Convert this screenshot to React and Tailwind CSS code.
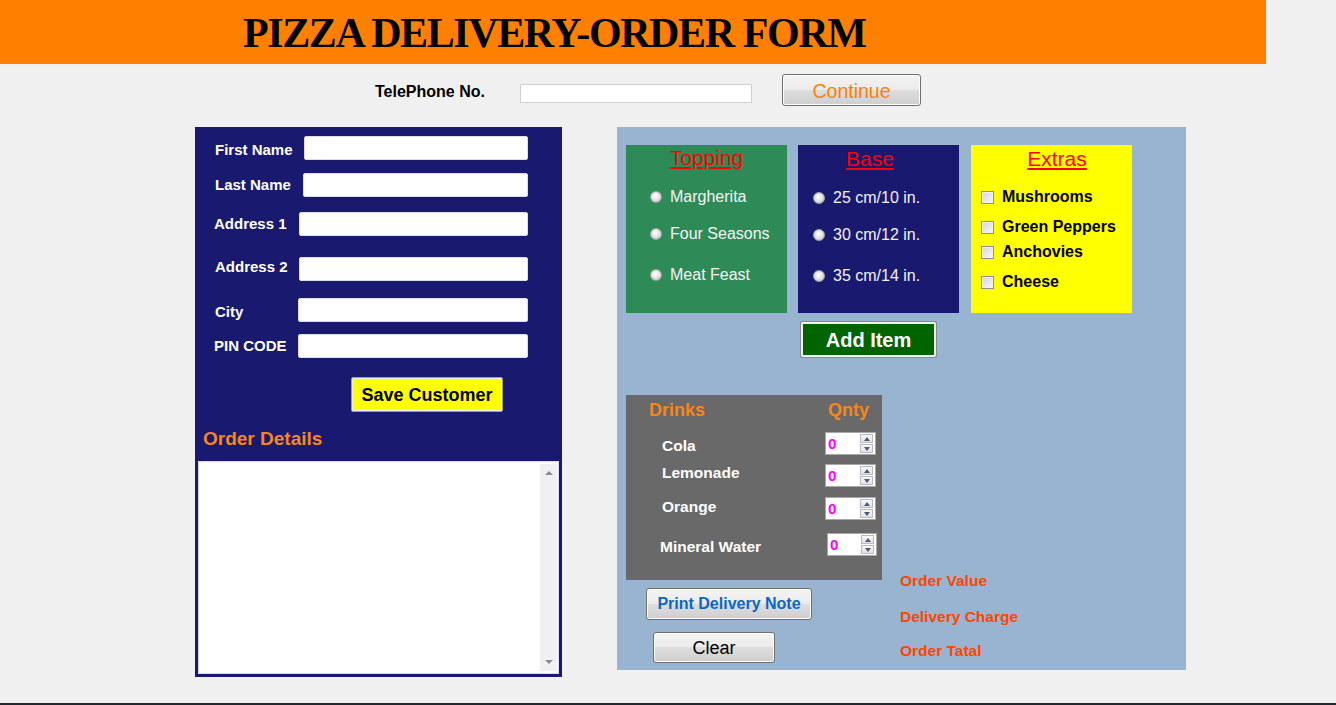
import React from 'react';

const btn =
  'border border-[#707070] rounded-[3px] bg-[linear-gradient(#f4f4f4,#ebebeb_50%,#dddddd_50%,#cfcfcf)] shadow-[inset_0_0_0_1px_#fcfcfc] flex items-center justify-center';

function Radio() {
  return (
    <span className="w-[12px] h-[12px] shrink-0 rounded-full border border-[#a3a3a3] bg-[radial-gradient(circle_at_45%_40%,#ffffff_0%,#ececec_35%,#b8b8b8_100%)]" />
  );
}

function Check() {
  return (
    <span className="w-[13px] h-[13px] shrink-0 border border-[#8f8f8f] bg-[linear-gradient(135deg,#d6d6d6,#f7f7f7)] shadow-[inset_0_0_0_1px_#f2f2f2]" />
  );
}

function Arrow({ up }) {
  return (
    <div className="flex-1 border border-[#b9b9c4] bg-[linear-gradient(#f7f7f7,#e2e2e2)] flex items-center justify-center">
      <svg width="6" height="4" viewBox="0 0 6 4">
        {up ? <path d="M0 4 L3 0 L6 4 Z" fill="#4d5a78" /> : <path d="M0 0 L3 4 L6 0 Z" fill="#4d5a78" />}
      </svg>
    </div>
  );
}

function Spinner({ className }) {
  return (
    <div className={className}>
      <span className="flex-1 pl-[2px] text-[15px] font-bold text-[#ff00ff] leading-none">0</span>
      <div className="w-[13px] h-[19px] mr-[2px] flex flex-col gap-[1px]">
        <Arrow up />
        <Arrow />
      </div>
    </div>
  );
}

const fields = [
  { label: 'First Name', row: 'mt-[9px] pl-[20px]', lab: 'w-[89px] mt-[4px]' },
  { label: 'Last Name', row: 'mt-[13px] pl-[20px]', lab: 'w-[88px]' },
  { label: 'Address 1', row: 'mt-[15px] pl-[19px]', lab: 'w-[85px]' },
  { label: 'Address 2', row: 'mt-[21px] pl-[20px]', lab: 'w-[84px] mb-[4px]' },
  { label: 'City', row: 'mt-[17px] pl-[20px]', lab: 'w-[83px] mt-[4px]' },
  { label: 'PIN CODE', row: 'mt-[12px] pl-[19px]', lab: 'w-[84px]' },
];

const toppings = [
  { t: 'Margherita', cls: 'mt-[17px]' },
  { t: 'Four Seasons', cls: 'mt-[17px]' },
  { t: 'Meat Feast', cls: 'mt-[21px]' },
];

const bases = [
  { t: '25 cm/10 in.', cls: 'mt-[17px]' },
  { t: '30 cm/12 in.', cls: 'mt-[17px]' },
  { t: '35 cm/14 in.', cls: 'mt-[21px]' },
];

const extras = [
  { t: 'Mushrooms', cls: 'mt-[16px]' },
  { t: 'Green Peppers', cls: 'mt-[10px]' },
  { t: 'Anchovies', cls: 'mt-[5px]' },
  { t: 'Cheese', cls: 'mt-[10px]' },
];

const drinks = [
  { t: 'Cola', row: 'mt-[12px] pl-[36px] pr-[6px]', lab: 'mt-[5px]', spin: 'w-[51px]' },
  { t: 'Lemonade', row: 'mt-[9px] pl-[36px] pr-[6px]', lab: 'mb-[5px]', spin: 'w-[51px]' },
  { t: 'Orange', row: 'mt-[10px] pl-[36px] pr-[6px]', lab: 'mb-[3px]', spin: 'w-[51px]' },
  { t: 'Mineral Water', row: 'mt-[13px] pl-[34px] pr-[5px]', lab: 'mt-[5px]', spin: 'w-[50px]' },
];

export default function App() {
  return (
    <div className="w-[1336px] h-[705px] bg-[#f0f0f0] flex flex-col overflow-hidden font-['Liberation_Sans',Arial,sans-serif]">
      {/* header */}
      <div className="w-[1266px] h-[64px] shrink-0 bg-[#ff8000] flex items-center pl-[243px]">
        <h1 className="font-['Liberation_Serif','Times_New_Roman',serif] font-bold text-[42px] leading-none tracking-[-1.4px] text-black mt-[2px]">
          PIZZA DELIVERY-ORDER FORM
        </h1>
      </div>

      {/* telephone row */}
      <div className="h-[63px] shrink-0 flex items-start pl-[375px]">
        <span className="w-[145px] mt-[19px] text-[16px] leading-[18px] font-bold text-black">TelePhone No.</span>
        <div className="mt-[20px] w-[232px] h-[19px] bg-white border border-[#cfcfcf]" />
        <div className={`${btn} ml-[30px] mt-[10px] w-[139px] h-[32px] pt-[3px]`}>
          <span className="text-[19.5px] text-[#ff8000] leading-none">Continue</span>
        </div>
      </div>

      {/* main */}
      <div className="flex items-start pl-[195px]">
        {/* customer panel */}
        <div className="w-[367px] h-[550px] bg-[#191970] flex flex-col">
          {fields.map((f) => (
            <div key={f.label} className={`flex items-center pr-[34px] ${f.row}`}>
              <span className={`text-[15px] leading-[18px] font-bold text-white ${f.lab}`}>{f.label}</span>
              <div className="flex-1 h-[24px] bg-white rounded-[2px] border border-[#dcdcf0]" />
            </div>
          ))}
          <div className="ml-[156px] mt-[19px] w-[152px] h-[35px] bg-[#ffff00] border border-[#9c9c9c] rounded-[2px] shadow-[inset_0_0_0_1px_#f0f0f0] flex items-center justify-center">
            <span className="text-[18px] font-bold text-black leading-none">Save Customer</span>
          </div>
          <div className="mt-[16px] pl-[8px] text-[19px] leading-[22px] font-bold text-[#f7861c]">Order Details</div>
          <div className="mt-[11px] mx-[3px] mb-[3px] flex-1 bg-white border border-[#d8d8f4] flex justify-end py-[2px] pr-[1px]">
            <div className="w-[17px] bg-[#f0f0f0] flex flex-col items-center justify-between py-[6px]">
              <svg width="8" height="5" viewBox="0 0 8 5">
                <path d="M0 5 L4 1 L8 5 Z" fill="#8a8a8a" />
              </svg>
              <svg width="8" height="5" viewBox="0 0 8 5">
                <path d="M0 0 L4 4 L8 0 Z" fill="#8a8a8a" />
              </svg>
            </div>
          </div>
        </div>

        {/* order panel */}
        <div className="ml-[55px] w-[569px] h-[543px] bg-[#99b4d1] pt-[18px] pl-[9px] flex flex-col">
          <div className="flex">
            <div className="w-[161px] h-[168px] bg-[#2e8b57] flex flex-col">
              <div className="pt-[1px] text-center text-[21px] leading-[24px] text-[#ff0000] underline underline-offset-[2px]">Topping</div>
              {toppings.map((r) => (
                <div key={r.t} className={`flex items-center h-[20px] pl-[24px] gap-[8px] ${r.cls}`}>
                  <Radio />
                  <span className="text-[16px] text-[#f4f4f4] leading-none">{r.t}</span>
                </div>
              ))}
            </div>
            <div className="ml-[11px] w-[161px] h-[168px] bg-[#191970] flex flex-col">
              <div className="pt-[2px] pr-[17px] text-center text-[21px] leading-[24px] text-[#ff0000] underline underline-offset-[2px]">Base</div>
              {bases.map((r) => (
                <div key={r.t} className={`flex items-center h-[20px] pl-[15px] gap-[8px] ${r.cls}`}>
                  <Radio />
                  <span className="text-[16px] text-[#f4f4f4] leading-none">{r.t}</span>
                </div>
              ))}
            </div>
            <div className="ml-[12px] w-[161px] h-[168px] bg-[#ffff00] flex flex-col">
              <div className="pt-[2px] pl-[11px] text-center text-[21px] leading-[24px] text-[#ff0000] underline underline-offset-[2px]">Extras</div>
              {extras.map((r) => (
                <div key={r.t} className={`flex items-center h-[20px] pl-[10px] gap-[8px] ${r.cls}`}>
                  <Check />
                  <span className="text-[16px] font-bold text-black leading-none">{r.t}</span>
                </div>
              ))}
            </div>
          </div>

          <div className="ml-[174px] mt-[8px] w-[137px] h-[37px] bg-[#006400] border border-[#8a8a8a] shadow-[inset_0_0_0_2px_#f2f2f2] rounded-[2px] flex items-center justify-center">
            <span className="text-[20px] font-bold text-white leading-none">Add Item</span>
          </div>

          <div className="mt-[37px] flex items-start">
            <div className="w-[256px] flex flex-col">
              <div className="h-[185px] bg-[#696969] flex flex-col">
                <div className="mt-[4px] h-[21px] flex items-center pl-[23px]">
                  <span className="w-[179px] text-[18px] font-bold text-[#f7861c] leading-none">Drinks</span>
                  <span className="text-[18px] font-bold text-[#f7861c] leading-none">Qnty</span>
                </div>
                {drinks.map((d) => (
                  <div key={d.t} className={`flex items-center ${d.row}`}>
                    <span className={`flex-1 text-[15.5px] font-bold text-white leading-none ${d.lab}`}>{d.t}</span>
                    <Spinner className={`${d.spin} h-[23px] bg-white border border-[#a8a8a8] flex items-center`} />
                  </div>
                ))}
              </div>
              <div className={`${btn} ml-[20px] mt-[8px] w-[166px] h-[32px]`}>
                <span className="text-[16px] font-bold text-[#0a66c8] leading-none">Print Delivery Note</span>
              </div>
              <div className={`${btn} ml-[27px] mt-[12px] w-[122px] h-[31px]`}>
                <span className="text-[18px] text-black leading-none">Clear</span>
              </div>
            </div>
            <div className="ml-[18px] pt-[177px] flex flex-col text-[15.5px] leading-[18px] font-bold text-[#ff4500]">
              <span>Order Value</span>
              <span className="mt-[18px]">Delivery Charge</span>
              <span className="mt-[16px]">Order Tatal</span>
            </div>
          </div>
        </div>
      </div>

      <div className="flex-1" />
      <div className="h-[2px] shrink-0 bg-[#1f2a30]" />
    </div>
  );
}
